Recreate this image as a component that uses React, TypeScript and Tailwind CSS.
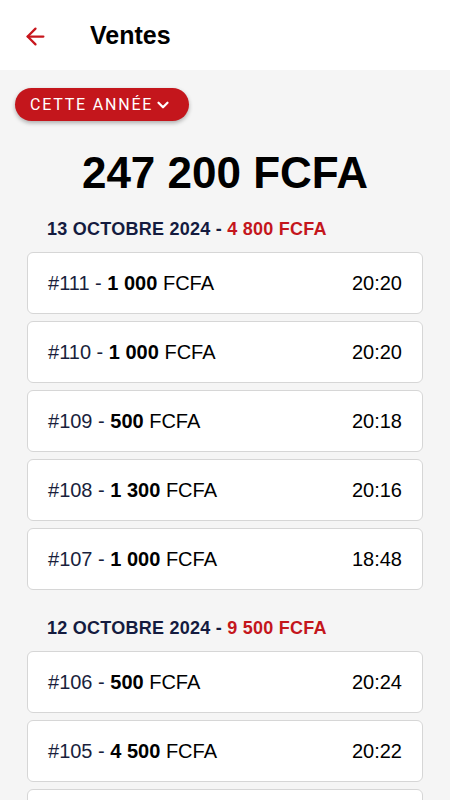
import { ArrowLeft, ChevronDown } from 'lucide-react'

type Sale = { id: number; amount: string; time: string }

const days: { date: string; total: string; sales: Sale[] }[] = [
  {
    date: '13 OCTOBRE 2024',
    total: '4 800 FCFA',
    sales: [
      { id: 111, amount: '1 000', time: '20:20' },
      { id: 110, amount: '1 000', time: '20:20' },
      { id: 109, amount: '500', time: '20:18' },
      { id: 108, amount: '1 300', time: '20:16' },
      { id: 107, amount: '1 000', time: '18:48' },
    ],
  },
  {
    date: '12 OCTOBRE 2024',
    total: '9 500 FCFA',
    sales: [
      { id: 106, amount: '500', time: '20:24' },
      { id: 105, amount: '4 500', time: '20:22' },
      { id: 104, amount: '1 000', time: '20:20' },
    ],
  },
]

export default function App() {
  return (
    <div className="h-[800px] overflow-hidden bg-[#f5f5f5] font-['Liberation_Sans',Arial,sans-serif]">
      <header className="h-[70px] bg-white flex items-center px-[22px] pt-[2px]">
        <ArrowLeft className="w-[27px] h-[27px] text-[#c8161d]" strokeWidth={2} />
        <h1 className="ml-[41px] text-[25px] font-bold text-black">Ventes</h1>
      </header>

      <div className="px-[15px] pt-[18px]">
        <button className="h-[33px] pl-[15px] pr-[17px] rounded-full bg-[#c4161c] text-white flex items-center gap-[1px] shadow-[0_2px_4px_rgba(0,0,0,0.3)] font-['Roboto',sans-serif] text-[16px] tracking-[1.8px]">
          CETTE ANNÉE
          <ChevronDown className="w-[18px] h-[18px]" strokeWidth={3} />
        </button>
      </div>

      <div className="text-center text-[44px] font-bold text-black leading-none mt-[30px]">247 200 FCFA</div>

      <div className="px-[27px] mt-[25px]">
        {days.map((d) => (
          <section key={d.date} className="mb-[29px]">
            <h2 className="pl-[20px] text-[18px] tracking-[0.25px] font-bold text-[#141b3f] leading-none mb-[14px]">
              {d.date} - <span className="text-[#c4161c]">{d.total}</span>
            </h2>
            <div className="flex flex-col gap-[7px]">
              {d.sales.map((s) => (
                <div
                  key={s.id}
                  className="h-[62px] bg-white border border-[#d6d6d6] rounded-[6px] flex items-center justify-between pl-[20px] pr-[20px] text-[20px]"
                >
                  <span>
                    <span className="text-[#1a1f3d]">#{s.id} - </span>
                    <span className="font-bold text-black">{s.amount}</span>
                    <span className="text-black"> FCFA</span>
                  </span>
                  <span className="text-black">{s.time}</span>
                </div>
              ))}
            </div>
          </section>
        ))}
      </div>
    </div>
  )
}
